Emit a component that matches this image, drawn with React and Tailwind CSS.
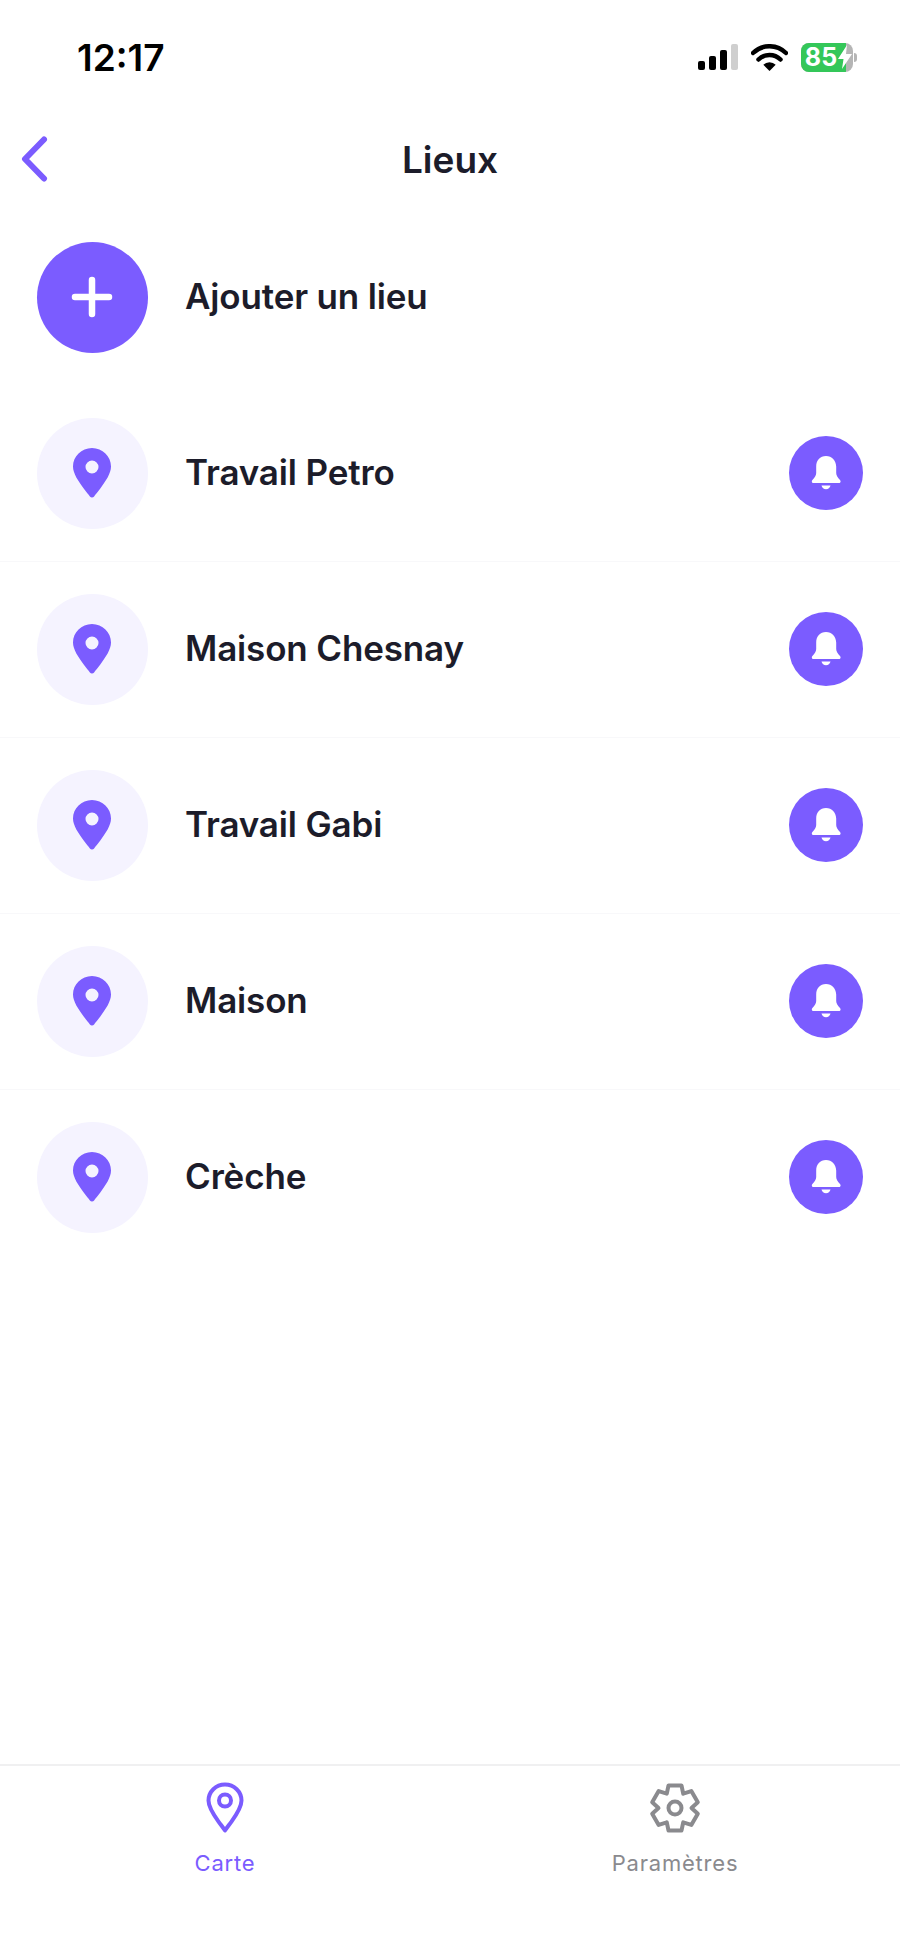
import React from "react";

const places = ["Travail Petro", "Maison Chesnay", "Travail Gabi", "Maison", "Crèche"];

// six teeth, angles measured from the top
const gearPoints = [0, 60, 120, 180, 240, 300]
  .flatMap((a) => [
    [a - 30, 16.5],
    [a - 16, 23.5],
    [a + 16, 23.5],
  ])
  .map(([deg, r]) => {
    const t = (deg * Math.PI) / 180;
    return `${(26 + r * Math.sin(t)).toFixed(2)},${(26 - r * Math.cos(t)).toFixed(2)}`;
  })
  .join(" ");

const Pin = () => (
  <svg className="mr-[2px]" width="38" height="50" viewBox="0 0 38 50" fill="#7B5CFF">
    <path
      fillRule="evenodd"
      d="M19 0C8.500 0 0 8.300 0 18.600c0 7 5.400 14.800 10.500 21.600 2.600 3.500 5 6.300 6.400 8.200 1 1.300 3.200 1.300 4.200 0 1.400-1.900 3.800-4.700 6.400-8.200C32.600 33.400 38 25.600 38 18.600 38 8.300 29.500 0 19 0Zm0 12.500a6.500 6.500 0 1 1 0 13 6.500 6.500 0 0 1 0-13Z"
    />
  </svg>
);

const Bell = () => (
  <svg width="30" height="34" viewBox="0 0 30 34" fill="#fff">
    <path d="M15 0C9 0 5.200 4.400 5.200 10.500v6.500c0 2.500-1.500 4.500-3.800 7-1.200 1.300-.5 3 1.300 3h25c1.800 0 2.500-1.700 1.300-3-2.300-2.500-3.800-4.500-3.800-7v-6.500C24.800 4.400 21 0 15 0Z" />
    <path d="M10.500 29.500h9c-.5 2.300-2.300 3.700-4.500 3.700s-4-1.400-4.500-3.700Z" />
  </svg>
);

const StatusBar = () => (
  <div className="flex h-[114px] items-center justify-between pl-[77px] pr-[43px]">
    <span className="text-[37px] font-semibold leading-none text-black">12:17</span>
    <div className="flex items-center">
      <div className="flex h-[26px] w-[40px] items-end justify-between">
        <div className="h-[9px] w-[7px] rounded-[2px] bg-black" />
        <div className="h-[14px] w-[7px] rounded-[2px] bg-black" />
        <div className="h-[20px] w-[7px] rounded-[2px] bg-black" />
        <div className="h-[26px] w-[7px] rounded-[2px] bg-[#cfcfcf]" />
      </div>
      <svg className="ml-[13px]" width="37" height="27" viewBox="0 0 37 27">
        <path d="M18.500 27l-6.200-6.300a8.800 8.800 0 0 1 12.400 0Z" fill="#000" />
        <path d="M7.500 15.500a15.500 15.500 0 0 1 22 0M2 9a23.500 23.500 0 0 1 33 0" fill="none" stroke="#000" strokeWidth="4.500" strokeLinecap="round" />
      </svg>
      <div className="ml-[13px] flex h-[29px] w-[52px] items-center overflow-hidden rounded-[8px] bg-[#b5b5b5]">
        <div className="flex h-full w-[45px] items-center justify-center gap-px bg-[#34c759] pl-[2px]">
          <span className="text-[25px] font-bold leading-none text-white">85</span>
          <svg className="-mr-[8px] shrink-0" width="14" height="24" viewBox="0 0 14 24" fill="#fff">
            <path d="M9 0 0 14h5.500L4 24l10-15H8Z" />
          </svg>
        </div>
      </div>
      <div className="ml-px h-[9px] w-[3px] rounded-r-full bg-[#b5b5b5]" />
    </div>
  </div>
);

const App = () => {
  return (
    <div className="flex min-h-[1947px] flex-col bg-white font-['Inter',sans-serif] text-[#1c1c2a]">
      <StatusBar />

      <div className="flex h-[90px] items-center justify-between">
        <div className="w-[100px] pl-[20px]">
          <svg width="30" height="46" viewBox="0 0 30 46" fill="none" stroke="#7B5CFF" strokeWidth="6" strokeLinecap="round" strokeLinejoin="round">
            <path d="M24 3.500 5 23l19 19.500" />
          </svg>
        </div>
        <h1 className="text-[37px] font-semibold leading-none">Lieux</h1>
        <div className="w-[100px]" />
      </div>

      <div className="h-[5px]" />

      <div className="flex h-[176px] items-center pl-[37px]">
        <div className="flex h-[111px] w-[111px] items-center justify-center rounded-full bg-[#7B5CFF]">
          <svg className="mr-[2px]" width="42" height="42" viewBox="0 0 42 42" stroke="#fff" strokeWidth="6.500" strokeLinecap="round">
            <path d="M21 4v34M4 21h34" />
          </svg>
        </div>
        <span className="-mt-[2px] ml-[37px] text-[35px] font-semibold tracking-[-0.15px]">Ajouter un lieu</span>
      </div>

      {places.map((name, i) => (
        <div
          key={name}
          className={
            i < places.length - 1
              ? "flex h-[176px] items-center pl-[37px] pr-[37px] shadow-[0_1px_0_#f8f8fa]"
              : "flex h-[176px] items-center pl-[37px] pr-[37px]"
          }
        >
          <div className="flex h-[111px] w-[111px] items-center justify-center rounded-full bg-[#f5f3ff]">
            <Pin />
          </div>
          <span className="-mt-[2px] ml-[37px] flex-1 text-[35px] font-semibold tracking-[-0.15px]">{name}</span>
          <div className="flex h-[74px] w-[74px] items-center justify-center rounded-full bg-[#7B5CFF]">
            <Bell />
          </div>
        </div>
      ))}

      <div className="flex-1" />

      <div className="flex h-[183px] border-t-2 border-[#f0f0f1] pt-[16px]">
        <div className="flex w-1/2 flex-col items-center">
          <svg width="38" height="52" viewBox="0 0 38 52" fill="none" stroke="#7B5CFF" strokeWidth="4" strokeLinejoin="round">
            <path d="M19 2.500C9.800 2.500 2.500 9.700 2.500 18.600c0 6.900 5.500 14.800 10 21 2.400 3.300 4.700 6.200 6.500 8.900 1.800-2.700 4.100-5.600 6.500-8.900 4.500-6.200 10-14.100 10-21C35.500 9.700 28.200 2.500 19 2.500Z" />
            <circle cx="19" cy="18.500" r="6" />
          </svg>
          <span className="mt-[18px] text-[22px] leading-none tracking-[0.8px] text-[#7B5CFF]">Carte</span>
        </div>
        <div className="flex w-1/2 flex-col items-center">
          <svg width="52" height="52" viewBox="0 0 52 52" fill="none" stroke="#8a8a8e" strokeWidth="4" strokeLinejoin="round">
            <polygon points={gearPoints} />
            <circle cx="26" cy="26" r="6.500" />
          </svg>
          <span className="mt-[18px] text-[22px] leading-none tracking-[0.8px] text-[#8a8a8e]">Paramètres</span>
        </div>
      </div>
    </div>
  );
};

export default App;
